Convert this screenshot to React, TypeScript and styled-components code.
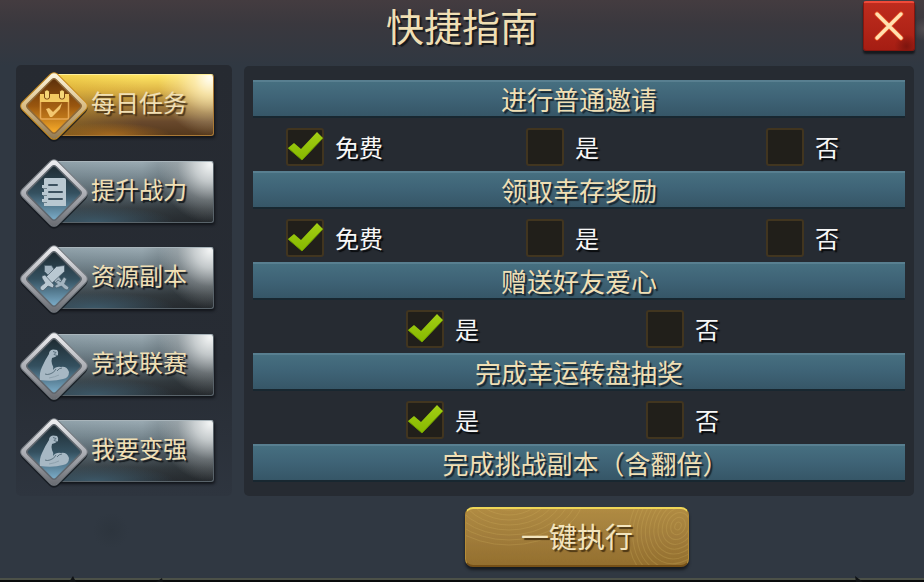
import React, { useState } from "react";
import styled, { createGlobalStyle } from "styled-components";

const GlobalStyle = createGlobalStyle`
  *, *::before, *::after { box-sizing: border-box; }
  body {
    margin: 0;
    background: #303842;
    font-family: "Noto Sans CJK SC", "Noto Sans", sans-serif;
  }
  h1, h2 { margin: 0; font-weight: 400; }
  button { font-family: inherit; cursor: pointer; }
`;

const Page = styled.main`
  display: flex;
  flex-direction: column;
  min-height: 100vh;
  background:
    radial-gradient(circle at 12% 91%, #2d353e 0, transparent 18px),
    radial-gradient(circle at 100% 5%, #514d51 0, transparent 12px),
    linear-gradient(#443c40 0, #3a383e 24px, #303842 66px, #303842 100%);
`;

const Header = styled.header`
  display: grid;
  grid-template-columns: 1fr auto 1fr;
  height: 65px;
  padding: 1px 9px 0;
`;

const Title = styled.h1`
  grid-column: 2;
  font-family: "Liberation Sans", "Noto Sans CJK SC", sans-serif;
  font-size: 38px;
  line-height: 54px;
  color: #f0dfb4;
  text-shadow: 2px 2px 1px #15191d;
`;

const CloseButton = styled.button`
  justify-self: end;
  display: grid;
  place-items: center;
  width: 52px;
  height: 50px;
  padding: 0;
  border: 1px solid #85160e;
  border-top: 2px solid #f04a39;
  border-radius: 3px;
  background:
    radial-gradient(ellipse at 85% 92%, #7d150e 0, transparent 12px),
    linear-gradient(#be2c1e, #b02417 60%, #a51d13);
  box-shadow: 0 3px 2px #17191d;
`;

const Body = styled.div`
  flex: 1;
  display: grid;
  grid-template-columns: 216px 1fr;
  grid-template-rows: 1fr auto;
  column-gap: 12px;
  padding: 0 10px 0 16px;
`;

const Nav = styled.nav`
  display: flex;
  flex-direction: column;
  justify-content: space-between;
  padding: 9px 18px 14px 3px;
  border-radius: 5px;
  background: linear-gradient(#262a31, #272c34 70%, #2e353f);
`;

const TabButton = styled.button`
  display: grid;
  grid-template-columns: 35px 35px 1fr;
  align-items: center;
  height: 62px;
  padding: 0;
  border: 0;
  background: none;
`;

const Plate = styled.span<{ $active: boolean }>`
  grid-area: 1 / 2 / 2 / -1;
  height: 62px;
  padding-left: 36px;
  border: 1px solid ${(p) => (p.$active ? "#a97936" : "#59636a")};
  border-top-color: ${(p) => (p.$active ? "#fff09a" : "#a9b5bb")};
  border-radius: 3px;
  font-size: 24px;
  line-height: 54px;
  text-align: left;
  white-space: nowrap;
  color: #f0dfb4;
  text-shadow: 2px 2px 1px ${(p) => (p.$active ? "#4a3519" : "#14191d")};
  box-shadow: 1px 2px 3px #111419;
  background: ${(p) =>
    p.$active
      ? `radial-gradient(ellipse 52px 58px at 98% 4%, #fffdf3 0, #fff0bdcc 30%, #fff0bd55 62%, #fff0bd00 100%),
         radial-gradient(ellipse 60px 12px at 35% 100%, #a5691f, #a5691f00),
         linear-gradient(90deg, #d9a51c55, #d9a51c00 55%),
         linear-gradient(#ffe663 0, #e0b848 24%, #a17a3a 52%, #68482c 78%, #55391d 100%)`
      : `radial-gradient(ellipse 52px 58px at 98% 4%, #f2f4f4 0, #dfe3e4cc 30%, #cfd4d655 62%, #cfd4d600 100%),
         radial-gradient(ellipse 80px 16px at 25% 100%, #3c5868, #3c586800),
         linear-gradient(90deg, #657b8733, #657b8700 55%, #20232566 95%),
         linear-gradient(#9aaab2 0, #7b8b93 24%, #566269 52%, #343c41 78%, #282d32 100%)`};
`;

const Badge = styled.svg`
  grid-area: 1 / 1 / 2 / 3;
  width: 70px;
  height: 74px;
  margin: -6px 0;
`;

const Panel = styled.section`
  display: flex;
  flex-direction: column;
  margin-top: 1px;
  padding: 14px 9px;
  border-radius: 5px;
  background: #262b32;
`;

const Group = styled.section``;

const Bar = styled.h2`
  height: 38px;
  border-top: 2px solid #587f90;
  border-bottom: 2px solid #182730;
  background: linear-gradient(#466f80, #3f6477 45%, #365667);
  font-size: 26px;
  line-height: 33px;
  text-align: center;
  color: #f0dfb4;
  text-shadow: 2px 2px 1px #17252e;
`;

const HalfWidth = styled.span`
  font-feature-settings: "halt";
`;

const Options = styled.div`
  display: flex;
  align-items: center;
  justify-content: center;
  gap: 134px;
  height: 53px;
  padding-top: 5px;
`;

const Option = styled.label`
  display: flex;
  align-items: center;
  gap: 11px;
  width: 106px;
  font-size: 24px;
  line-height: 36px;
  white-space: nowrap;
  color: #f7f7f7;
  text-shadow: 2px 2px 1px #080a0c;
  cursor: pointer;
`;

const Tick = styled.span`
  display: grid;
  width: 38px;
  height: 38px;

  & > * { grid-area: 1 / 1; }
  & > svg { visibility: hidden; pointer-events: none; }
  & > input:checked + svg { visibility: visible; }
`;

const TickInput = styled.input`
  appearance: none;
  width: 38px;
  height: 38px;
  margin: 0;
  border: 2px solid #41351f;
  border-radius: 3px;
  background: #211f1a;
`;

const Footer = styled.footer`
  grid-column: 2;
  display: flex;
  justify-content: center;
  padding: 11px 4px 10px 0;
`;

const RunButton = styled.button`
  display: grid;
  width: 224px;
  height: 60px;
  padding: 0;
  overflow: hidden;
  border: 1px solid #b58c36;
  border-top: 2px solid #efd657;
  border-bottom: 2px solid #765017;
  border-radius: 8px;
  background: linear-gradient(#b08b43, #a17d3c 50%, #94702f);
  box-shadow: 0 3px 3px #171b20;
  font-size: 28px;
  line-height: 54px;
  color: #f3e4bd;
  text-shadow: 2px 2px 1px #4d3715;

  & > * { grid-area: 1 / 1; }
`;

const Edge = styled.svg`
  display: block;
  width: 100%;
  height: 7px;
  margin-top: -1px;
`;

type IconName = "calendar" | "book" | "swords" | "arm";

function Glyph({ name }: { name: IconName }) {
  if (name === "calendar") {
    return (
      <g>
        <rect x="21.500" y="24" width="28" height="24" rx="1.500" fill="#b36b1755" stroke="#e6a854" strokeWidth="1.500" />
        <path d="M21 23h29v8H21z" fill="#f3ca62" />
        <rect x="25.500" y="19" width="5" height="9" rx="2" fill="#f6d778" stroke="#794611" />
        <rect x="40.500" y="19" width="5" height="9" rx="2" fill="#f6d778" stroke="#794611" />
        <path d="M27 38l3-1 4 4 9-9-2 6-8 8h-2z" fill="#f3c66f" />
      </g>
    );
  }
  if (name === "book") {
    return (
      <g>
        <path d="M26 20h19q2 0 2 2v26H25v-4h-2v-3h2v-4h-2v-3h2v-4h-2v-3h2v-6z" fill="#b9c8d1" />
        <path d="M30 27h8M30 34h13M30 41h13" stroke="#3d5260" strokeWidth="2" strokeLinecap="round" />
        <path d="M24 30.500h4M24 37.500h4M24 44.500h4" stroke="#6f828d" />
      </g>
    );
  }
  if (name === "swords") {
    return (
      <g>
        <g fill="#a3b4c0" stroke="#465b68" strokeWidth="0.700">
          <path d="M25.500 21.500l7 0 10 15-4 4-13-13z" />
          <path d="M36.500 39l2.500-3 2.500 2 3.500-5 2.500 2-2 5 3 2q2 1 1 3t-4 0l-3-3-5 2-2-2 3-2z" />
        </g>
        <g fill="#b9c8d2" stroke="#425563" strokeWidth="0.700">
          <path d="M45.500 21.500l-8 1-12 12 6 6 14-13z" />
          <path d="M23 32l3-1 9 10-1 3-5-2-3 3q-2 3-4 1t0-4l4-3-3-5z" />
        </g>
      </g>
    );
  }
  return (
    <g>
      <path
        d="M30 23q0-4 4-4.500l4 .5q2 2 1 5l-3 2-3 1q-1 3 0 6 2 3 1 6 3-4 8-3 6-1 8 5 0 6-6 7-10 3-23 1-1-7 2-13 3-7 7-13z"
        fill="#a7b8c4"
      />
      <path d="M34 20.500l3 1-2 2 3 1" stroke="#5a707e" fill="none" />
      <path d="M37 38q-2 4-6 5-3 1-5 0M43 37q-3 0-5 3" stroke="#5d7380" fill="none" />
      <path d="M30 47q6-1 10-3" stroke="#8ea1ad" fill="none" />
    </g>
  );
}

function TabBadge({ name, active, id }: { name: IconName; active: boolean; id: string }) {
  return (
    <Badge viewBox="0 -3 70 74" aria-hidden="true">
      <defs>
        <linearGradient id={`${id}-rim`} x1="0" y1="0" x2="1" y2="1">
          <stop offset="0" stopColor={active ? "#fffbe8" : "#f5f5f7"} />
          <stop offset="0.500" stopColor={active ? "#d9bd86" : "#aeb0b6"} />
          <stop offset="1" stopColor={active ? "#8b7450" : "#64676d"} />
        </linearGradient>
        <linearGradient id={`${id}-core`} x1="0" y1="0" x2="1" y2="1">
          <stop offset="0" stopColor={active ? "#5a2f0a" : "#1d2930"} />
          <stop offset="0.500" stopColor={active ? "#99560f" : "#34505f"} />
          <stop offset="1" stopColor={active ? "#ffb22b" : "#7fb1ce"} />
        </linearGradient>
      </defs>
      <g transform="rotate(45 35 35)">
        <rect x="11" y="11" width="51" height="51" rx="6" fill="#101419" opacity="0.700" />
        <rect x="10" y="10" width="50" height="50" rx="5" fill={`url(#${id}-rim)`} stroke={active ? "#c98d20" : "#767c82"} />
        <rect x="15" y="15" width="40" height="40" rx="3" fill={`url(#${id}-core)`} stroke={active ? "#8e6939" : "#5f666d"} strokeWidth="1.500" />
      </g>
      <Glyph name={name} />
    </Badge>
  );
}

function CheckMark() {
  return (
    <svg width="38" height="38" viewBox="0 0 38 38" aria-hidden="true">
      <defs>
        <linearGradient id="tick-fill" x1="0" y1="0" x2="0" y2="1">
          <stop offset="0" stopColor="#a3cf14" />
          <stop offset="1" stopColor="#86b800" />
        </linearGradient>
      </defs>
      <path d="M2 20l6-5 7 6L31 4l6 6-21 22z" fill="url(#tick-fill)" />
      <path d="M2 20l14 12L37 10" fill="none" stroke="#709e00" />
    </svg>
  );
}

function ButtonTexture() {
  const rings = Array.from({ length: 12 }, (_, i) => i);
  return (
    <svg width="100%" height="56" viewBox="0 0 222 56" preserveAspectRatio="none" aria-hidden="true">
      <g fill="none" stroke="#d3b35f" strokeWidth="1" opacity="0.250">
        {rings.map((i) => (
          <ellipse key={`r${i}`} cx="212" cy="17" rx={3 + i * 4} ry={4 + i * 5} transform="rotate(25 212 17)" />
        ))}
        {rings.slice(0, 9).map((i) => (
          <ellipse key={`l${i}`} cx="43" cy="-18" rx={20 + i * 7} ry={14 + i * 5} />
        ))}
      </g>
    </svg>
  );
}

const tabs: { label: string; icon: IconName }[] = [
  { label: "每日任务", icon: "calendar" },
  { label: "提升战力", icon: "book" },
  { label: "资源副本", icon: "swords" },
  { label: "竞技联赛", icon: "arm" },
  { label: "我要变强", icon: "arm" },
];

const groups: { title: string; closing?: string; options: string[] }[] = [
  { title: "进行普通邀请", options: ["免费", "是", "否"] },
  { title: "领取幸存奖励", options: ["免费", "是", "否"] },
  { title: "赠送好友爱心", options: ["是", "否"] },
  { title: "完成幸运转盘抽奖", options: ["是", "否"] },
  { title: "完成挑战副本（含翻倍", closing: "）", options: [] },
];

export default function App() {
  const [tab, setTab] = useState(0);
  const [chosen, setChosen] = useState<number[]>(groups.map(() => 0));

  const choose = (group: number, option: number) =>
    setChosen((prev) => prev.map((value, i) => (i === group ? option : value)));

  return (
    <>
      <GlobalStyle />
      <Page>
        <Header>
          <Title>快捷指南</Title>
          <CloseButton type="button" aria-label="关闭">
            <svg width="32" height="32" viewBox="0 0 32 32" aria-hidden="true">
              <path d="M4 3l24 24M28 3L4 27" stroke="#e94e22" strokeWidth="5" strokeLinecap="round" />
              <path d="M4 3l24 24M28 3L4 27" stroke="#ffe2b0" strokeWidth="3.500" strokeLinecap="round" />
            </svg>
          </CloseButton>
        </Header>
        <Body>
          <Nav>
            {tabs.map((item, i) => (
              <TabButton key={item.label} type="button" aria-pressed={tab === i} onClick={() => setTab(i)}>
                <Plate $active={tab === i}>{item.label}</Plate>
                <TabBadge name={item.icon} active={tab === i} id={`tab${i}`} />
              </TabButton>
            ))}
          </Nav>
          <Panel>
            {groups.map((group, g) => (
              <Group key={group.title}>
                <Bar>
                  {group.title}
                  {group.closing && <HalfWidth>{group.closing}</HalfWidth>}
                </Bar>
                {group.options.length > 0 && (
                  <Options>
                    {group.options.map((option, o) => (
                      <Option key={option}>
                        <Tick>
                          <TickInput type="checkbox" checked={chosen[g] === o} onChange={() => choose(g, o)} />
                          <CheckMark />
                        </Tick>
                        {option}
                      </Option>
                    ))}
                  </Options>
                )}
              </Group>
            ))}
          </Panel>
          <Footer>
            <RunButton type="button">
              <ButtonTexture />
              <span>一键执行</span>
            </RunButton>
          </Footer>
        </Body>
        <Edge viewBox="0 0 924 7" preserveAspectRatio="none" aria-hidden="true">
          <rect y="2" width="924" height="2" fill="#4c5148" />
          <rect y="4" width="924" height="3" fill="#090b0c" />
          <path d="M69 6l4-6 3 6zM156 6l6-4 1 4zM855 0l8 6h-7z" fill="#101315" />
        </Edge>
      </Page>
    </>
  );
}
